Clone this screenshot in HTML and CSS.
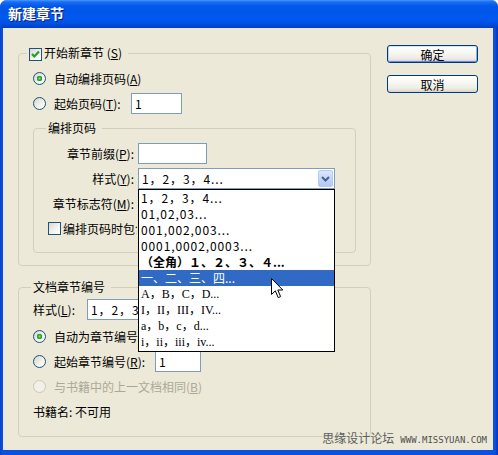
FILE: index.html
```html
<!DOCTYPE html>
<html lang="zh-CN">
<head>
<meta charset="utf-8">
<title>新建章节</title>
<link rel="stylesheet" href="styles.css">
</head>
<body>
<div class="window">
  <div class="titlebar"><span class="title">新建章节</span></div>
  <div class="client">
    <div class="left">
      <fieldset class="group g1">
        <legend><span class="cb"><svg width="11" height="11" viewBox="0 0 11 11"><path d="M2 5 L4.3 7.5 L9 2.5" fill="none" stroke="#21A121" stroke-width="2.2"/></svg></span><span class="lt">开始新章节 (<u>S</u>)</span></legend>
        <div class="gbody">
          <div class="row"><span class="radio on"></span><span>自动编排页码(<u>A</u>)</span></div>
          <div class="row"><span class="radio"></span><span class="lbl w77">起始页码(<u>T</u>):</span><span class="input w51">1</span></div>
          <fieldset class="group inner">
            <legend>编排页码</legend>
            <div class="form">
              <span class="flabel">章节前缀(<u>P</u>):</span><span class="input w69"></span>
              <span class="flabel">样式(<u>Y</u>):</span>
              <span class="select w197"><span class="val spaced">1，2，3，4...</span><span class="arrow"><svg width="9" height="6" viewBox="0 0 9 6"><path d="M1 1 L4.5 4.5 L8 1" fill="none" stroke="#4D6185" stroke-width="2"/></svg></span></span>
              <span class="flabel">章节标志符(<u>M</u>):</span><span class="input w160"></span>
              <span class="crow"><span class="cb"></span><span class="lt clip w74">编排页码时包含前缀(<u>I</u>)</span></span>
            </div>
          </fieldset>
        </div>
      </fieldset>
      <fieldset class="group g2">
        <legend>文档章节编号</legend>
        <div class="gbody b2">
          <div class="row r27"><span class="lbl w54">样式(<u>L</u>):</span><span class="select w140"><span class="val spaced clip w47">1，2，3，4...</span></span></div>
          <div class="row r26"><span class="radio on"></span><span class="clip w84">自动为章节编号(<u>C</u>)</span></div>
          <div class="row"><span class="radio"></span><span class="lbl w101">起始章节编号(<u>R</u>):</span><span class="input w46">1</span></div>
          <div class="row dis"><span class="radio off"></span><span>与书籍中的上一文档相同(<u>B</u>)</span></div>
          <div class="row"><span>书籍名: 不可用</span></div>
        </div>
      </fieldset>
    </div>
    <div class="buttons">
      <button class="btn default">确定</button>
      <button class="btn">取消</button>
    </div>

    <div class="droplist">
      <div class="spaced">1，2，3，4...</div>
      <div class="spaced">01,02,03...</div>
      <div class="spaced">001,002,003...</div>
      <div class="spaced">0001,0002,0003...</div>
      <div class="bold">（全角）１、２、３、４...</div>
      <div class="sel">一、二、三、四...</div>
      <div class="serif">A，B，C，D...</div>
      <div class="serif">I，II，III，IV...</div>
      <div class="serif">a，b，c，d...</div>
      <div class="serif">i，ii，iii，iv...</div>
    </div>
    <svg class="cursor" width="13" height="21" viewBox="0 0 13 21"><path d="M0.5 0.5 L0.5 16.5 L4.3 12.8 L7.2 19.6 L9.6 18.6 L6.8 12 L11.8 12 Z" fill="#fff" stroke="#000" stroke-width="1" stroke-linejoin="miter"/></svg>
    <div class="watermark"><span class="wm-cn">思缘设计论坛</span><span class="wm-en">WWW.MISSYUAN.COM</span></div>
  </div>
</div>
</body>
</html>
```
FILE: styles.css
```css
* { box-sizing: border-box; }
html, body { margin: 0; padding: 0; background: #fff; }
body {
  width: 498px; height: 455px; overflow: hidden;
  font-family: "Noto Sans CJK SC", "Noto Sans", sans-serif;
  font-size: 12px; color: #000;
}
u { text-decoration: underline; text-underline-offset: 1px; }

.window {
  width: 498px; height: 455px;
  display: flex; flex-direction: column;
  background: linear-gradient(90deg, #0840C6 0, #0A50E2 2px, #0A50E2 495px, #0632B5 498px);
  border-radius: 7px 7px 0 0;
  overflow: hidden;
}
.titlebar {
  height: 28px; flex: none;
  display: flex; align-items: center;
  padding: 0 0 2px 8px;
  background: linear-gradient(180deg, #4A98FF 0, #1A6CF6 2px, #0258EA 6px, #0056E8 12px, #0059EF 18px, #0052E4 23px, #0046D2 26px, #003EC2 28px);
}
.title {
  font-size: 14px; font-weight: bold; color: #fff;
  text-shadow: 1px 1px 0 #0A1B6E;
}
.client {
  flex: 1;
  margin: 0 5px 5px 3px;
  background: #ECE9D8;
  position: relative;
  display: flex; align-items: flex-start;
  padding: 18px 0 0 15px;
}
.left { width: 353px; flex: none; }

.group {
  margin: 0; padding: 0;
  border: 1px solid #D0D0BF; border-radius: 4px;
  min-width: 0;
}
.group > legend {
  margin-left: 12px;
  padding: 0 6px 0 2px;
  height: 14px; line-height: 14px;
  white-space: nowrap;
}
.g1 > legend { margin-left: 8px; }
.g2 { margin-top: 14px; }
.gbody { padding: 6px 14px 12px; }
.gbody.b2 { padding: 2px 14px 12px; }
.inner { margin-top: 5px; }

.row { display: flex; align-items: center; height: 25px; white-space: nowrap; }
.row.r27 { height: 27px; }
.row.r26 { height: 26px; }
.row.dis { color: #ACA899; }

.lbl { flex: none; }
.w77 { width: 77px; }
.w54 { width: 54px; }
.w101 { width: 101px; }

.clip { display: inline-block; overflow: hidden; white-space: nowrap; flex: none; }
.w74 { width: 74px; }
.w84 { width: 84px; }
.w47 { width: 47px; }

.radio {
  flex: none;
  width: 13px; height: 13px; border-radius: 50%;
  border: 1px solid #1C5180;
  background: linear-gradient(135deg, #D4D4CC 0%, #F1F1EC 55%, #FFFFFF 100%);
  margin-right: 8px;
}
.radio.on {
  background:
    radial-gradient(circle at 50% 50%, #7DDB7D 0, #34B034 1.5px, #21A121 2.6px, transparent 3px),
    linear-gradient(135deg, #D4D4CC 0%, #F1F1EC 55%, #FFFFFF 100%);
}
.radio.off { border-color: #CAC8BB; background: #F2F1E9; }

.cb {
  display: inline-flex; align-items: center; justify-content: center;
  width: 13px; height: 13px;
  border: 1px solid #1C5180;
  background: linear-gradient(135deg, #D8D8D0 0%, #F3F3EE 55%, #FFFFFF 100%);
  vertical-align: -2px;
  flex: none;
}
.cb svg { display: block; }
.lt { margin-left: 2px; }

.input {
  display: inline-block; flex: none;
  height: 21px; line-height: 19px;
  border: 1px solid #7F9DB9; background: #fff;
  padding: 0 3px;
}
.w51 { width: 51px; }
.w69 { width: 69px; }
.w46 { width: 46px; }
.w160 { width: 160px; }

.select {
  display: flex; align-items: center; flex: none;
  height: 21px;
  border: 1px solid #7F9DB9; background: #fff;
  padding: 0 1px 0 3px;
  white-space: nowrap; overflow: hidden;
}
.w197 { width: 197px; }
.w140 { width: 140px; }
.select .arrow {
  margin-left: auto;
  width: 15px; height: 17px;
  display: flex; align-items: center; justify-content: center;
  border: 1px solid #B5C8F3; border-radius: 2px;
  background: linear-gradient(180deg, #DDE7FE 0%, #C6D6FB 50%, #B3C8F7 100%);
}
.select .arrow svg { display: block; }

.spaced { letter-spacing: 0.9px; }

.form {
  display: grid;
  grid-template-columns: 86px 197px;
  grid-auto-rows: 25px;
  column-gap: 4px;
  align-items: center; justify-items: start;
  padding: 6px 0 11px 14px;
}
.flabel { justify-self: end; white-space: nowrap; }
.crow { grid-column: 1 / 3; display: flex; align-items: center; white-space: nowrap; }

.buttons {
  flex: none; width: 91px;
  display: flex; flex-direction: column; gap: 12px;
  margin: -1px 0 0 16px;
}
.btn {
  height: 18px; padding: 0;
  border: 1px solid #003C74; border-radius: 3px;
  background: linear-gradient(180deg, #FFFFFF 0%, #F8F8F5 35%, #EEEDE7 75%, #D9D4C8 100%);
  font: inherit; font-size: 12px; line-height: 15px; color: #000;
}
.btn.default {
  box-shadow: inset 0 1px 0 #CEE7FF, inset 1px 0 0 #BCD4F6, inset -1px 0 0 #89ADE4, inset 0 -1px 0 #6982EE;
}

.droplist {
  position: absolute;
  left: 135px; top: 161px;
  width: 197px; height: 163px;
  border: 1px solid #000; background: #fff;
}
.droplist div {
  height: 16px; line-height: 16px;
  padding-left: 2px; white-space: nowrap;
}
.droplist .bold { font-weight: bold; }
.droplist .sel { background: #316AC5; color: #fff; }
.droplist .serif { font-family: "Liberation Serif", "Noto Sans CJK SC", serif; font-size: 12px; }

.cursor { position: absolute; left: 268px; top: 250px; }

.watermark {
  position: absolute; right: 6px; bottom: 4px;
  display: flex; align-items: baseline; gap: 6px;
  white-space: nowrap;
}
.wm-cn { color: #5E5E5E; font-size: 12px; }
.wm-en { color: #4E4E4E; font-family: "DejaVu Sans Mono", monospace; font-size: 9px; }
```
